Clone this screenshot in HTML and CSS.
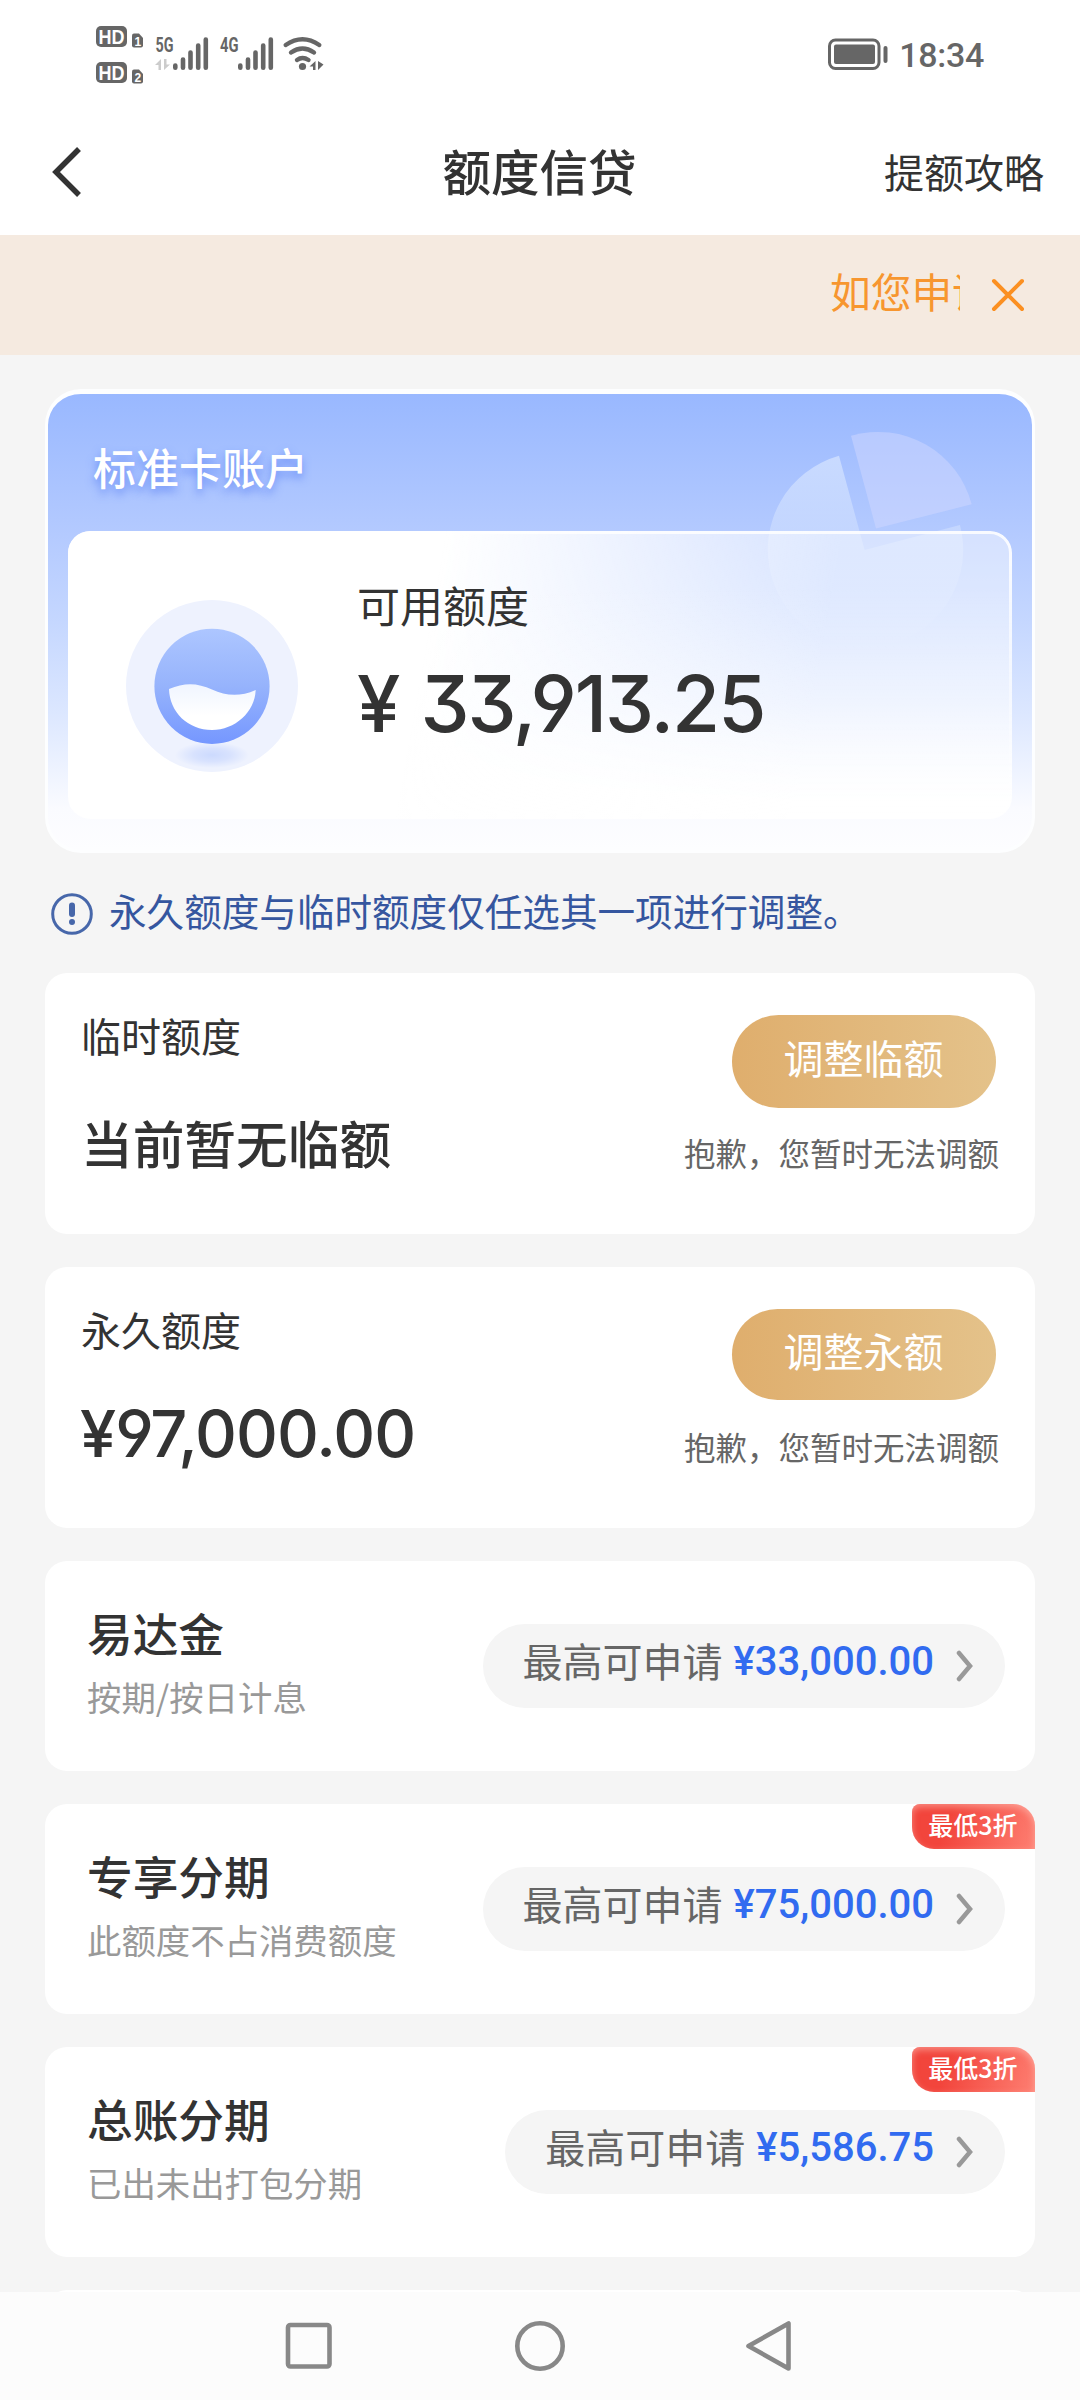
FILE: index.html
```html
<!DOCTYPE html>
<html lang="zh-CN">
<head>
<meta charset="utf-8">
<title>额度信贷</title>
<link rel="stylesheet" href="styles.css">
</head>
<body>
<div class="screen">
  <header class="status">
    <svg class="status-icons" width="240" height="64" viewBox="90 22 240 64" fill="#666">
      <rect x="96" y="26" width="31" height="21" rx="5"/>
      <rect x="96" y="62" width="31" height="21" rx="5"/>
      <text class="hd" x="98.5" y="43.5" textLength="26" lengthAdjust="spacingAndGlyphs">HD</text>
      <text class="hd" x="98.5" y="79.5" textLength="26" lengthAdjust="spacingAndGlyphs">HD</text>
      <path d="M132 35.500Q132 33.500 134 33.500H139L143 38V45.500Q143 47.500 141 47.500H134Q132 47.500 132 45.500Z"/>
      <path d="M132 71.500Q132 69.500 134 69.500H139L143 74V81.500Q143 83.500 141 83.500H134Q132 83.500 132 81.500Z"/>
      <text class="sim" x="134.500" y="45.500">1</text>
      <text class="sim" x="134.500" y="81.500">2</text>
      <text class="net" x="155.500" y="51.500" textLength="18" lengthAdjust="spacingAndGlyphs">5G</text>
      <text class="net" x="220" y="51.500" textLength="18.500" lengthAdjust="spacingAndGlyphs">4G</text>
      <path fill="#ccc" d="M161 59V70H158.500V65H155ZM164 59V70L170 64.500H166.500V59Z"/>
      <g stroke="#666" stroke-width="4.600" stroke-linecap="round">
        <path d="M175.300 65.500V67.700M183 59.500V67.700M190.500 52.500V67.700M198.200 45.500V67.700M205.800 39.500V67.700"/>
        <path d="M240.300 65.500V67.700M248 59.500V67.700M255.500 52.500V67.700M263.200 45.500V67.700M270.800 39.500V67.700"/>
        <path fill="none" stroke-width="4.400" d="M285.700 45Q302.500 33.500 319.300 45M291 52.500Q302.500 44.500 314 52.500M297 60Q302.500 56 308.500 60"/>
      </g>
      <circle cx="302.500" cy="66.500" r="3.600"/>
      <path d="M315.500 61V70H313V66.500H309.500ZM318 61L323.500 64.500L318 70Z"/>
    </svg>
    <div class="status-right">
      <svg width="60" height="32" viewBox="829 38 60 32">
        <rect x="830.500" y="40" width="49.500" height="28.500" rx="6" fill="none" stroke="#666" stroke-width="3"/>
        <rect x="835" y="44.500" width="41" height="19.500" rx="2" fill="#666"/>
        <rect x="884.500" y="46" width="4" height="17" rx="2" fill="#666"/>
      </svg>
      <span class="clock">18:34</span>
    </div>
  </header>

  <nav class="titlebar">
    <svg class="back" width="32" height="54" viewBox="0 0 32 54" fill="none" stroke="#333" stroke-width="5.500"><path d="M29 4L6 27L29 50"/></svg>
    <h1 class="title">额度信贷</h1>
    <span class="guide">提额攻略</span>
  </nav>

  <div class="notice">
    <div class="marquee">如您申请</div>
    <svg width="34" height="34" viewBox="0 0 34 34" stroke="#fb9022" stroke-width="4" stroke-linecap="round"><path d="M3 3L31 31M31 3L3 31"/></svg>
  </div>

  <main class="content">
    <section class="hero">
      <svg class="pie" width="220" height="240" viewBox="760 420 220 240">
        <defs>
          <linearGradient id="pieFade" gradientUnits="userSpaceOnUse" x1="0" y1="455" x2="0" y2="650"><stop offset="0" stop-color="#d2e1ff" stop-opacity=".8"/><stop offset="1" stop-color="#dbe8ff" stop-opacity="0"/></linearGradient>
        </defs>
        <path fill="url(#pieFade)" d="M864.600 550L839 455.700A97.700 97.700 0 1 0 960 525Z"/>
        <path fill="#d0d6ff" fill-opacity=".52" d="M876 528.500L851 435.700A97 97 0 0 1 971.700 504.300Z"/>
      </svg>
      <h2 class="hero-title">标准卡账户</h2>
      <div class="balance">
        <svg class="gauge" width="174" height="174" viewBox="125 599 174 174">
          <defs>
            <linearGradient id="ball" x1="0" y1="0" x2="0" y2="1"><stop offset="0" stop-color="#adc6ff"/><stop offset=".5" stop-color="#96b3fc"/><stop offset="1" stop-color="#7597ff"/></linearGradient>
            <linearGradient id="wave" x1="0" y1="0" x2="0" y2="1"><stop offset="0" stop-color="#f0f5ff"/><stop offset=".7" stop-color="#fff"/></linearGradient>
            <radialGradient id="glow"><stop offset="0" stop-color="#ccdafe"/><stop offset=".5" stop-color="#d8e2fe"/><stop offset="1" stop-color="#eef2fe"/></radialGradient>
          </defs>
          <circle cx="212" cy="686" r="86" fill="#eef2fe"/>
          <ellipse cx="212" cy="755" rx="37" ry="13" fill="url(#glow)"/>
          <circle cx="212" cy="686.300" r="57.600" fill="url(#ball)"/>
          <path fill="url(#wave)" d="M169 689C185 682 198 683 212 689.500C226 696 240 697 255.700 690C255 712 235 730 212 730C188 730 169.500 712 169 689Z"/>
        </svg>
        <div class="balance-text">
          <div class="balance-label">可用额度</div>
          <div class="balance-amount"><span class="yen">¥</span>33,913.25</div>
        </div>
      </div>
    </section>

    <p class="tip">
      <svg width="42" height="42" viewBox="0 0 42 42"><circle cx="21" cy="21" r="19.300" fill="none" stroke="#4767aa" stroke-width="3"/><path d="M21 12.500V21" stroke="#4767aa" stroke-width="6" stroke-linecap="round"/><circle cx="21" cy="29" r="3" fill="#4767aa"/></svg>
      <span>永久额度与临时额度仅任选其一项进行调整。</span>
    </p>

    <section class="card limit">
      <div class="limit-info">
        <div class="limit-name">临时额度</div>
        <div class="limit-state">当前暂无临额</div>
      </div>
      <div class="limit-action">
        <button class="adjust">调整临额</button>
        <div class="sorry">抱歉，您暂时无法调额</div>
      </div>
    </section>

    <section class="card limit">
      <div class="limit-info">
        <div class="limit-name">永久额度</div>
        <div class="limit-money">¥97,000.00</div>
      </div>
      <div class="limit-action">
        <button class="adjust adjust-short">调整永额</button>
        <div class="sorry">抱歉，您暂时无法调额</div>
      </div>
    </section>

    <section class="card product">
      <div><div class="product-name">易达金</div><div class="product-desc">按期/按日计息</div></div>
      <div class="pill"><span>最高可申请</span><b class="money">¥33,000.00</b><svg class="arrow" width="18" height="32" viewBox="0 0 18 32"><path d="M3 3L14 16L3 29"/></svg></div>
    </section>
    <section class="card product">
      <div class="tag">最低3折</div>
      <div><div class="product-name">专享分期</div><div class="product-desc">此额度不占消费额度</div></div>
      <div class="pill"><span>最高可申请</span><b class="money">¥75,000.00</b><svg class="arrow" width="18" height="32" viewBox="0 0 18 32"><path d="M3 3L14 16L3 29"/></svg></div>
    </section>
    <section class="card product">
      <div class="tag">最低3折</div>
      <div><div class="product-name">总账分期</div><div class="product-desc">已出未出打包分期</div></div>
      <div class="pill"><span>最高可申请</span><b class="money">¥5,586.75</b><svg class="arrow" width="18" height="32" viewBox="0 0 18 32"><path d="M3 3L14 16L3 29"/></svg></div>
    </section>
    <section class="card product"></section>
  </main>

  <footer class="keys">
    <svg width="52" height="52" viewBox="0 0 52 52"><rect x="5" y="5" width="41.500" height="41.500" rx="2.500"/></svg>
    <svg width="52" height="52" viewBox="0 0 52 52"><circle cx="26" cy="26" r="22.700"/></svg>
    <svg width="52" height="52" viewBox="0 0 52 52"><path stroke-linejoin="round" d="M43.500 3.500V48.500L3.500 26Z"/></svg>
  </footer>
</div>
</body>
</html>
```
FILE: styles.css
```css
* { box-sizing: border-box; margin: 0; padding: 0; }
body { background: #f5f5f5; color: #333; font-family: "Noto Sans CJK SC", "Noto Sans", sans-serif; }
svg { display: block; flex: none; }
.screen { width: 1080px; height: 2400px; display: flex; flex-direction: column; overflow: hidden; white-space: nowrap; }

.status { height: 108px; flex: none; background: #fff; display: flex; justify-content: space-between; align-items: center; padding: 0 96px 0 90px; }
.status-right { display: flex; align-items: center; gap: 11px; }
.clock { font: 500 34px/40px Roboto, sans-serif; letter-spacing: -.3px; color: #666; padding-top: 2px; }
.hd { font: bold 20px "Liberation Sans", sans-serif; fill: #fff; }
.sim { font: bold 12px "Liberation Sans", sans-serif; fill: #fff; }
.net { font: bold 20px Roboto, sans-serif; }

.titlebar { height: 127px; flex: none; background: #fff; display: grid; grid-template-columns: 1fr auto 1fr; align-items: center; padding: 0 36px 0 50px; }
.title { font-size: 48.500px; font-weight: 500; line-height: 60px; margin: -3px 0 0 -15px; }
.guide { font-size: 40px; line-height: 60px; justify-self: end; margin-top: -2px; }

.notice { height: 120px; flex: none; background: #f5eae0; color: #f7962f; display: flex; align-items: center; justify-content: flex-end; gap: 31px; padding: 0 55px 5px 0; }
.marquee { width: 130px; overflow: hidden; font-size: 40.700px; line-height: 60px; margin-top: -4px; }
.notice svg { margin-top: 5px; }

.content { flex: 1; min-height: 0; overflow: hidden; padding: 34px 45px 0; }
.hero { position: relative; height: 464px; border: 3px solid #fdfeff; border-top-width: 5px; border-radius: 36px; background: linear-gradient(#99b8ff 0%, #b4caff 31%, #c5d7ff 50%, #dce7ff 70%, #fafbff 91%, #fdfdff 100%); padding: 42px 20px 0; }
.pie { position: absolute; left: 712px; top: 26px; }
.hero-title { color: #fff; font-size: 43px; font-weight: 500; line-height: 60px; padding-left: 25px; text-shadow: 0 5px 8px rgba(70,110,240,.6); }
.balance { position: relative; height: 288px; width: 944px; margin-top: 35px; border-radius: 22px; display: flex; align-items: flex-start; gap: 58px; padding: 68px 0 0 57px;
  background: linear-gradient(rgba(255,255,255,0) 20%, rgba(255,255,255,.25) 60%, rgba(255,255,255,.9) 98%), linear-gradient(100deg, #fff 38%, rgba(255,255,255,.45) 78%); }
.balance::after { content: ""; position: absolute; inset: 0; border: 3px solid #fff; border-radius: 22px; opacity: .85; mask-image: linear-gradient(#000 10%, transparent); }
.balance-text { margin-top: -25px; }
.balance-label { font-size: 43px; line-height: 60px; }
.balance-amount { font: 500 78px/90px Inter, sans-serif; font-feature-settings: "ss01", "cv09"; letter-spacing: -2px; margin-top: 25px; }
.yen { margin-right: 22px; }

.tip { height: 120px; display: flex; align-items: center; gap: 16px; padding-left: 6px; font-size: 37.600px; line-height: 50px; color: #35569f; }
.tip svg { margin-top: 2px; }
.tip span { margin-top: -6px; }

.card { position: relative; background: #fff; border-radius: 22px; margin-bottom: 33px; display: flex; justify-content: space-between; }
.limit { height: 261px; padding: 42px 36px 0 36px; }
.limit-name { font-size: 40px; line-height: 40px; }
.limit-state { font-size: 51.700px; font-weight: 500; line-height: 60px; margin-top: 57px; }
.limit-money { font: 500 65px/70px Inter, sans-serif; font-feature-settings: "ss01", "cv09"; letter-spacing: -1px; margin: 50px 0 0 -1px; }
.limit-action { display: flex; flex-direction: column; align-items: flex-end; }
.adjust { display: block; border: 0; width: 264px; height: 93px; border-radius: 47px; margin-right: 3px; padding: 0 1px 10px 0; background: linear-gradient(90deg, #dfae6d, #e4c28a); color: #fff; font: 40px/60px "Noto Sans CJK SC", sans-serif; }
.adjust-short { height: 91px; margin-bottom: 2px; }
.sorry { color: #666; font-size: 31.500px; line-height: 40px; margin-top: 24px; }

.product { height: 210px; padding: 44px 30px 0 42px; }
.product-name { font-size: 45.700px; font-weight: 500; line-height: 56px; margin-top: -1px; }
.product-desc { font-size: 34.400px; line-height: 40px; margin-top: 16px; color: #999; }
.pill { height: 84px; margin-top: 19px; border-radius: 42px; background: #f5f5f5; color: #666; display: flex; align-items: center; padding: 0 31px 12px 40px; font-size: 40px; line-height: 60px; }
.money { font: 500 40px/60px Roboto, sans-serif; color: #316bf0; margin: 3px 0 0 11px; }
.arrow { margin: 12px 0 0 22px; fill: none; stroke: #999; stroke-width: 4.5; stroke-linecap: round; }
.tag { position: absolute; top: 0; right: 0; width: 123px; height: 45px; border-radius: 8px 22px 0 22px; background: linear-gradient(110deg, #f2453c 30%, #fe7f72); box-shadow: inset 0 3px 7px rgba(255,210,200,.5); color: #fff; font-size: 25px; font-weight: 500; line-height: 40px; text-align: center; padding-right: 1px; }

.keys { height: 108px; flex: none; background: #fcfcfc; display: flex; gap: 179px; justify-content: center; align-items: center; }
.keys svg { fill: none; stroke: #888; stroke-width: 4.600; }
```
